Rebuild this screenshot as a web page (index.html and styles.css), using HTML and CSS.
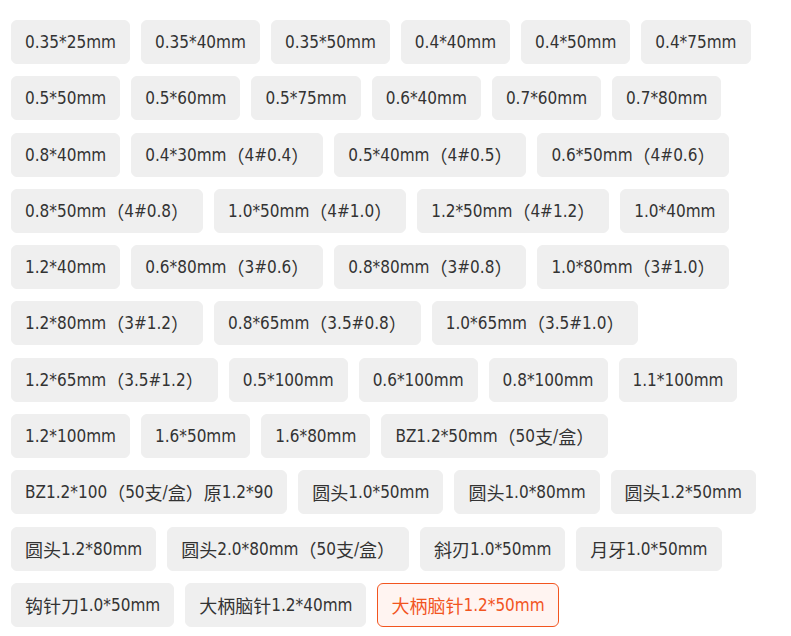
FILE: index.html
```html
<!DOCTYPE html>
<html lang="zh">
<head>
<meta charset="utf-8">
<title>规格</title>
<link rel="stylesheet" href="styles.css">
</head>
<body>
<div class="specs">
  <span class="spec">0.35*25mm</span>
  <span class="spec">0.35*40mm</span>
  <span class="spec">0.35*50mm</span>
  <span class="spec">0.4*40mm</span>
  <span class="spec">0.4*50mm</span>
  <span class="spec">0.4*75mm</span>
  <span class="spec">0.5*50mm</span>
  <span class="spec">0.5*60mm</span>
  <span class="spec">0.5*75mm</span>
  <span class="spec">0.6*40mm</span>
  <span class="spec">0.7*60mm</span>
  <span class="spec">0.7*80mm</span>
  <span class="spec">0.8*40mm</span>
  <span class="spec">0.4*30mm<span class="cn">（</span>4#0.4<span class="cn">）</span></span>
  <span class="spec">0.5*40mm<span class="cn">（</span>4#0.5<span class="cn">）</span></span>
  <span class="spec">0.6*50mm<span class="cn">（</span>4#0.6<span class="cn">）</span></span>
  <span class="spec">0.8*50mm<span class="cn">（</span>4#0.8<span class="cn">）</span></span>
  <span class="spec">1.0*50mm<span class="cn">（</span>4#1.0<span class="cn">）</span></span>
  <span class="spec">1.2*50mm<span class="cn">（</span>4#1.2<span class="cn">）</span></span>
  <span class="spec">1.0*40mm</span>
  <span class="spec">1.2*40mm</span>
  <span class="spec">0.6*80mm<span class="cn">（</span>3#0.6<span class="cn">）</span></span>
  <span class="spec">0.8*80mm<span class="cn">（</span>3#0.8<span class="cn">）</span></span>
  <span class="spec">1.0*80mm<span class="cn">（</span>3#1.0<span class="cn">）</span></span>
  <span class="spec">1.2*80mm<span class="cn">（</span>3#1.2<span class="cn">）</span></span>
  <span class="spec">0.8*65mm<span class="cn">（</span>3.5#0.8<span class="cn">）</span></span>
  <span class="spec">1.0*65mm<span class="cn">（</span>3.5#1.0<span class="cn">）</span></span>
  <span class="spec">1.2*65mm<span class="cn">（</span>3.5#1.2<span class="cn">）</span></span>
  <span class="spec">0.5*100mm</span>
  <span class="spec">0.6*100mm</span>
  <span class="spec">0.8*100mm</span>
  <span class="spec">1.1*100mm</span>
  <span class="spec">1.2*100mm</span>
  <span class="spec">1.6*50mm</span>
  <span class="spec">1.6*80mm</span>
  <span class="spec">BZ1.2*50mm<span class="cn">（</span>50<span class="cn">支</span>/<span class="cn">盒）</span></span>
  <span class="spec">BZ1.2*100<span class="cn">（</span>50<span class="cn">支</span>/<span class="cn">盒）原</span>1.2*90</span>
  <span class="spec"><span class="cn">圆头</span>1.0*50mm</span>
  <span class="spec"><span class="cn">圆头</span>1.0*80mm</span>
  <span class="spec"><span class="cn">圆头</span>1.2*50mm</span>
  <span class="spec"><span class="cn">圆头</span>1.2*80mm</span>
  <span class="spec"><span class="cn">圆头</span>2.0*80mm<span class="cn">（</span>50<span class="cn">支</span>/<span class="cn">盒）</span></span>
  <span class="spec"><span class="cn">斜刃</span>1.0*50mm</span>
  <span class="spec"><span class="cn">月牙</span>1.0*50mm</span>
  <span class="spec"><span class="cn">钩针刀</span>1.0*50mm</span>
  <span class="spec"><span class="cn">大柄脑针</span>1.2*40mm</span>
  <span class="spec spec-active"><span class="cn">大柄脑针</span>1.2*50mm</span>
</div>
</body>
</html>
```

FILE: styles.css
```css
html, body {
  margin: 0;
  padding: 0;
  background: #ffffff;
}

.specs {
  display: flex;
  flex-wrap: wrap;
  align-content: flex-start;
  column-gap: 11px;
  row-gap: 12.3px;
  width: 770px;
  padding: 20px 0 0 11px;
  font-family: "DejaVu Sans", "Noto Sans CJK SC", sans-serif;
  font-stretch: condensed;
  font-size: 17px;
  color: #333333;
}

.spec {
  box-sizing: border-box;
  height: 44px;
  line-height: 42px;
  padding: 0 13px;
  border: 1px solid #efefef;
  border-radius: 6px;
  background: #efefef;
  white-space: nowrap;
}

.cn {
  font-family: "Noto Sans CJK SC", sans-serif;
  font-size: 18px;
  vertical-align: top;
}

.spec-active {
  border-color: #f2551f;
  background: #fff4f1;
  color: #f2551f;
}
```
